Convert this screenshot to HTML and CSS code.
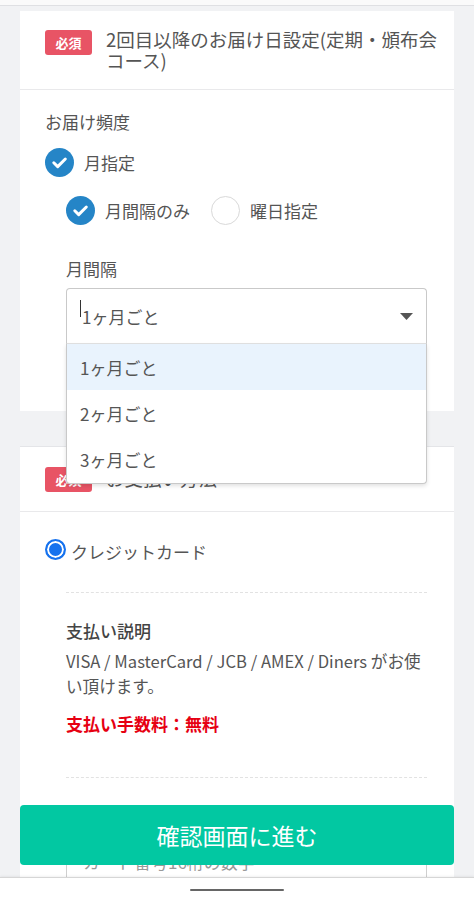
FILE: index.html
```html
<!DOCTYPE html>
<html lang="ja">
<head>
<meta charset="utf-8">
<title>お届け日設定</title>
<link rel="stylesheet" href="styles.css">
</head>
<body>
<div class="topstrip"></div>
<main class="page">
  <section class="card">
    <div class="card-head card-head--two">
      <span class="badge">必須</span>
      <h2 class="card-title">2回目以降のお届け日設定(定期・頒布会コース)</h2>
    </div>
    <div class="card-body card-body--freq">
      <div class="field-label">お届け頻度</div>
      <div class="opt opt-main">
        <span class="check on"><svg viewBox="0 0 29 29" width="29" height="29"><path d="M8.8 14.8l3.9 3.8 7.6-7.6" fill="none" stroke="#fff" stroke-width="3" stroke-linecap="round" stroke-linejoin="round"/></svg></span>
        <span class="opt-text">月指定</span>
      </div>
      <div class="opt-row">
        <div class="opt">
          <span class="check on"><svg viewBox="0 0 29 29" width="29" height="29"><path d="M8.8 14.8l3.9 3.8 7.6-7.6" fill="none" stroke="#fff" stroke-width="3" stroke-linecap="round" stroke-linejoin="round"/></svg></span>
          <span class="opt-text">月間隔のみ</span>
        </div>
        <div class="opt">
          <span class="check"></span>
          <span class="opt-text">曜日指定</span>
        </div>
      </div>
      <div class="sub">
        <div class="field-label">月間隔</div>
        <div class="select-wrap">
          <div class="select">
            <span class="cursor"></span>
            <span class="select-value">1ヶ月ごと</span>
            <svg class="arrow" viewBox="0 0 13 7" width="13" height="7"><path d="M0 0h13L6.5 7z" fill="#555"/></svg>
          </div>
          <ul class="menu">
            <li class="menu-item is-active">1ヶ月ごと</li>
            <li class="menu-item">2ヶ月ごと</li>
            <li class="menu-item">3ヶ月ごと</li>
          </ul>
        </div>
      </div>
    </div>
  </section>

  <section class="card card--next">
    <div class="card-head card-head--one">
      <span class="badge">必須</span>
      <h2 class="card-title">お支払い方法</h2>
    </div>
    <div class="card-body card-body--pay">
      <div class="radio-row">
        <span class="radio"></span>
        <span class="radio-text">クレジットカード</span>
      </div>
      <div class="sub">
        <div class="dash"></div>
        <div class="pay-label">支払い説明</div>
        <p class="pay-desc">VISA / MasterCard / JCB / AMEX / Diners がお使い頂けます。</p>
        <div class="pay-fee">支払い手数料：無料</div>
        <div class="dash dash--second"></div>
        <div class="pay-label pay-label--card">カード番号</div>
        <div class="input">カード番号16桁の数字</div>
      </div>
    </div>
  </section>
</main>

<button class="cta" type="button">確認画面に進む</button>
<div class="navbar"><span class="home-indicator"></span></div>
</body>
</html>
```

FILE: styles.css
```css
* { box-sizing: border-box; }

body {
  margin: 0;
  background: #f1f2f4;
  font-family: "Noto Sans CJK JP", "Noto Sans", sans-serif;
  color: #555;
}

.topstrip {
  height: 6px;
  background: #fafafa;
  border-bottom: 1px solid #dfe0e3;
}

.page {
  padding: 5px 20px 160px;
}

.card {
  background: #fff;
}

.card--next {
  margin-top: 35px;
  border-top: 1px solid #e4e5e8;
}

.card-head {
  display: flex;
  align-items: flex-start;
  gap: 14px;
  padding: 18px 14px 18px 25px;
  border-bottom: 1px solid #e9e9eb;
}

.card-head--one {
  padding-top: 19px;
  padding-bottom: 19px;
}

.badge {
  flex: none;
  width: 47px;
  height: 25px;
  margin-top: 1px;
  background: #e85465;
  color: #fff;
  border-radius: 3px;
  font-size: 13px;
  font-weight: bold;
  display: flex;
  align-items: center;
  justify-content: center;
}

.card-title {
  margin: 0;
  font-size: 18.5px;
  font-weight: normal;
  line-height: 21px;
  color: #555;
}

.card-head--one .card-title {
  margin-top: 2px;
}

.card-body--freq {
  padding: 20px 27px 67px 25px;
}

.field-label {
  font-size: 17px;
  line-height: 24px;
  color: #555;
}

.opt {
  display: flex;
  align-items: center;
  gap: 10px;
  font-size: 17px;
  line-height: 24px;
  color: #555;
}

.opt-main {
  margin-top: 14px;
}

.opt-row {
  display: flex;
  gap: 21px;
  margin-top: 19px;
  padding-left: 21px;
}

.check {
  flex: none;
  width: 29px;
  height: 29px;
  border-radius: 50%;
  border: 1.5px solid #d9d9d9;
  background: #fff;
  display: flex;
  align-items: center;
  justify-content: center;
}

.check.on {
  border: none;
  background: #2585c7;
}

.check svg {
  display: block;
}

.sub {
  margin-left: 21px;
}

.card-body--freq .sub {
  margin-top: 32px;
}

.select-wrap {
  position: relative;
  margin-top: 7px;
}

.select {
  height: 56px;
  display: flex;
  align-items: center;
  padding: 0 13px;
  border: 1px solid #c9c9c9;
  border-bottom-color: #e2e2e2;
  border-radius: 4px 4px 0 0;
  font-size: 17px;
  color: #555;
  background: #fff;
}

.cursor {
  align-self: flex-start;
  margin-top: 11px;
  width: 1px;
  height: 17px;
  background: #333;
  margin-right: 1px;
}

.arrow {
  margin-left: auto;
  display: block;
}

.menu {
  position: absolute;
  top: 100%;
  left: 0;
  right: 0;
  z-index: 10;
  margin: 0;
  padding: 0;
  list-style: none;
  background: #fff;
  border: 1px solid #c9c9c9;
  border-top: none;
  border-radius: 0 0 4px 4px;
  box-shadow: 0 2px 4px rgba(0, 0, 0, 0.12);
}

.menu-item {
  height: 46px;
  display: flex;
  align-items: center;
  padding-left: 13px;
  font-size: 17px;
  color: #555;
}

.menu-item:last-child {
  height: 47px;
}

.menu-item.is-active {
  background: #e9f3fd;
}

.card-body--pay {
  padding: 28px 27px 40px 25px;
}

.radio-row {
  display: flex;
  align-items: flex-start;
  gap: 5px;
}

.radio {
  flex: none;
  width: 21px;
  height: 21px;
  margin-top: -1px;
  border-radius: 50%;
  border: 2px solid #1672ee;
  background: #1672ee;
  box-shadow: inset 0 0 0 2px #fff;
}

.radio-text {
  font-size: 17px;
  line-height: 24px;
  color: #555;
}

.dash {
  margin-top: 28px;
  border-top: 1px dashed #e2e2e2;
}

.dash--second {
  margin-top: 41px;
}

.pay-label {
  margin-top: 26px;
  font-size: 17px;
  line-height: 24px;
  font-weight: 500;
  color: #444;
}

.pay-desc {
  margin: 6px 0 0;
  font-size: 16.6px;
  line-height: 25px;
  color: #555;
}

.pay-fee {
  margin-top: 13px;
  font-size: 17px;
  line-height: 24px;
  font-weight: bold;
  color: #e60012;
}

.input {
  margin-top: 8px;
  height: 50px;
  display: flex;
  align-items: center;
  padding-left: 16px;
  border: 1px solid #cfcfcf;
  border-radius: 4px;
  font-size: 17px;
  color: #999;
}

.cta {
  position: fixed;
  left: 20px;
  right: 20px;
  bottom: 35px;
  height: 60px;
  border: none;
  border-radius: 4px;
  background: #02c8a2;
  color: #fff;
  font-family: "Noto Sans CJK JP", "Noto Sans", sans-serif;
  font-size: 23px;
  display: flex;
  align-items: center;
  justify-content: center;
  padding: 0;
}

.navbar {
  position: fixed;
  left: 0;
  right: 0;
  bottom: 0;
  height: 23px;
  background: #fff;
  border-top: 1px solid #d6d6d6;
  box-shadow: 0 -1px 2px rgba(0, 0, 0, 0.06);
  display: flex;
  justify-content: center;
}

.home-indicator {
  margin-top: 11px;
  width: 94px;
  height: 2px;
  background: #666;
  border-radius: 1px;
}
```
